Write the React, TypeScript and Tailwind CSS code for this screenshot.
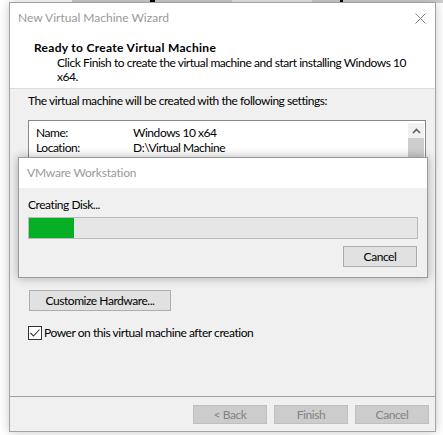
import React from 'react'

const font = { fontFamily: 'Lato, "Noto Sans", sans-serif' }

function WinButton({ label, disabled, className = '' }: { label: string; disabled?: boolean; className?: string }) {
  return (
    <div
      className={
        'flex items-center justify-center border text-[12px] leading-none ' +
        (disabled
          ? 'bg-[#cccccc] border-[#bfbfbf] text-[#838383] '
          : 'bg-[#e1e1e1] border-[#adadad] text-black ') +
        className
      }
    >
      {label}
    </div>
  )
}

export default function App() {
  return (
    <div className="relative w-[443px] h-[435px] bg-white overflow-hidden tracking-[-0.45px]" style={font}>
      {/* desktop strip behind the window */}
      <div className="absolute left-[72px] top-0 w-[371px] h-[3px] bg-[#cfcfcf]">
        <div className="absolute left-[78px] top-0 w-[5px] h-[3px] bg-black" />
        <div className="absolute left-[230px] top-0 w-[3px] h-[3px] bg-black" />
        <div className="absolute left-[268px] top-0 w-[3px] h-[3px] bg-black" />
        <div className="absolute left-[160px] top-0 w-[80px] h-[3px] bg-[#ececec]" />
      </div>

      {/* wizard window */}
      <div className="absolute left-[9px] top-[2px] w-[427px] h-[430px] border border-[#a3a3a3] bg-[#f0f0f0] flex flex-col shadow-[0_0_10px_rgba(0,0,0,0.22)]">
        <div className="h-[86px] bg-white border-b border-[#dcdcdc] flex flex-col">
          <div className="h-[30px] flex items-center justify-between pl-[8px] pr-[9px]">
            <span className="text-[12px] text-[#999999] leading-none tracking-normal">New Virtual Machine Wizard</span>
            <svg width="11" height="11" viewBox="0 0 11 11">
              <path d="M0.5 0.5 L10.5 10.5 M10.5 0.5 L0.5 10.5" stroke="#808080" strokeWidth="1" fill="none" />
            </svg>
          </div>
          <div className="pl-[24px] pt-[7px] text-[12px] font-bold text-black leading-[16px] tracking-[0.3px]">
            Ready to Create Virtual Machine
          </div>
          <div className="pl-[47px] text-[12px] text-black leading-[14px] whitespace-nowrap">
            Click Finish to create the virtual machine and start installing Windows 10
            <br />
            x64.
          </div>
        </div>

        <div className="flex-1 flex flex-col pl-[18px] pr-[9px] pt-[4px]">
          <div className="text-[12px] leading-[16px] text-black">
            The virtual machine will be created with the following settings:
          </div>
          <div className="mt-[11px] h-[150px] border border-[#828790] bg-white flex">
            <div className="flex-1 pl-[7px] pt-[4px] text-[12px] leading-[15px] text-black">
              <div className="flex">
                <span className="w-[97px]">Name:</span>
                <span>Windows 10 x64</span>
              </div>
              <div className="flex">
                <span className="w-[97px]">Location:</span>
                <span>D:\Virtual Machine</span>
              </div>
            </div>
            <div className="w-[16px] flex flex-col mt-[2px] mr-[1px]">
              <div className="h-[15px] bg-[#f0f0f0] flex items-center justify-center">
                <svg width="9" height="6" viewBox="0 0 9 6">
                  <path d="M1 5 L4.5 1.5 L8 5" stroke="#606060" strokeWidth="1.6" fill="none" />
                </svg>
              </div>
              <div className="h-[60px] bg-[#cdcdcd]" />
            </div>
          </div>
          <WinButton label="Customize Hardware..." className="mt-[20px] ml-[1px] w-[142px] h-[21px]" />
          <div className="mt-[14px] flex items-center gap-[2px]">
            <div className="w-[14px] h-[14px] border border-[#333333] bg-white flex items-center justify-center">
              <svg width="12" height="12" viewBox="0 0 12 12">
                <path d="M1.5 6 L4.5 9 L10.5 2.5" stroke="#333333" strokeWidth="1.1" fill="none" />
              </svg>
            </div>
            <span className="text-[12px] leading-[16px] text-black">Power on this virtual machine after creation</span>
          </div>
        </div>

        <div className="h-[35px] border-t border-[#a0a0a0] flex justify-end gap-[7px] pt-[8px] pr-[6px]">
          <WinButton label="< Back" disabled className="w-[74px] h-[19px]" />
          <WinButton label="Finish" disabled className="w-[74px] h-[19px]" />
          <WinButton label="Cancel" disabled className="w-[74px] h-[19px]" />
        </div>
      </div>

      {/* progress popup */}
      <div className="absolute left-[18px] top-[157px] w-[410px] h-[121px] border border-[#9a9a9a] bg-[#f0f0f0] flex flex-col shadow-[0_0_9px_rgba(0,0,0,0.3)]">
        <div className="h-[30px] bg-white flex items-center pl-[8px]">
          <span className="text-[12px] text-[#999999] leading-none tracking-[-0.2px]">VMware Workstation</span>
        </div>
        <div className="flex flex-col px-[9px] pt-[9px]">
          <div className="text-[12px] leading-[16px] text-black">Creating Disk...</div>
          <div className="mt-[4px] h-[22px] w-[390px] border border-[#bcbcbc] bg-[#e6e6e6]">
            <div className="h-full w-[45px] bg-[#06b025]" />
          </div>
          <div className="flex justify-end mt-[7px] pr-[1px]">
            <WinButton label="Cancel" className="w-[74px] h-[21px]" />
          </div>
        </div>
      </div>
    </div>
  )
}
